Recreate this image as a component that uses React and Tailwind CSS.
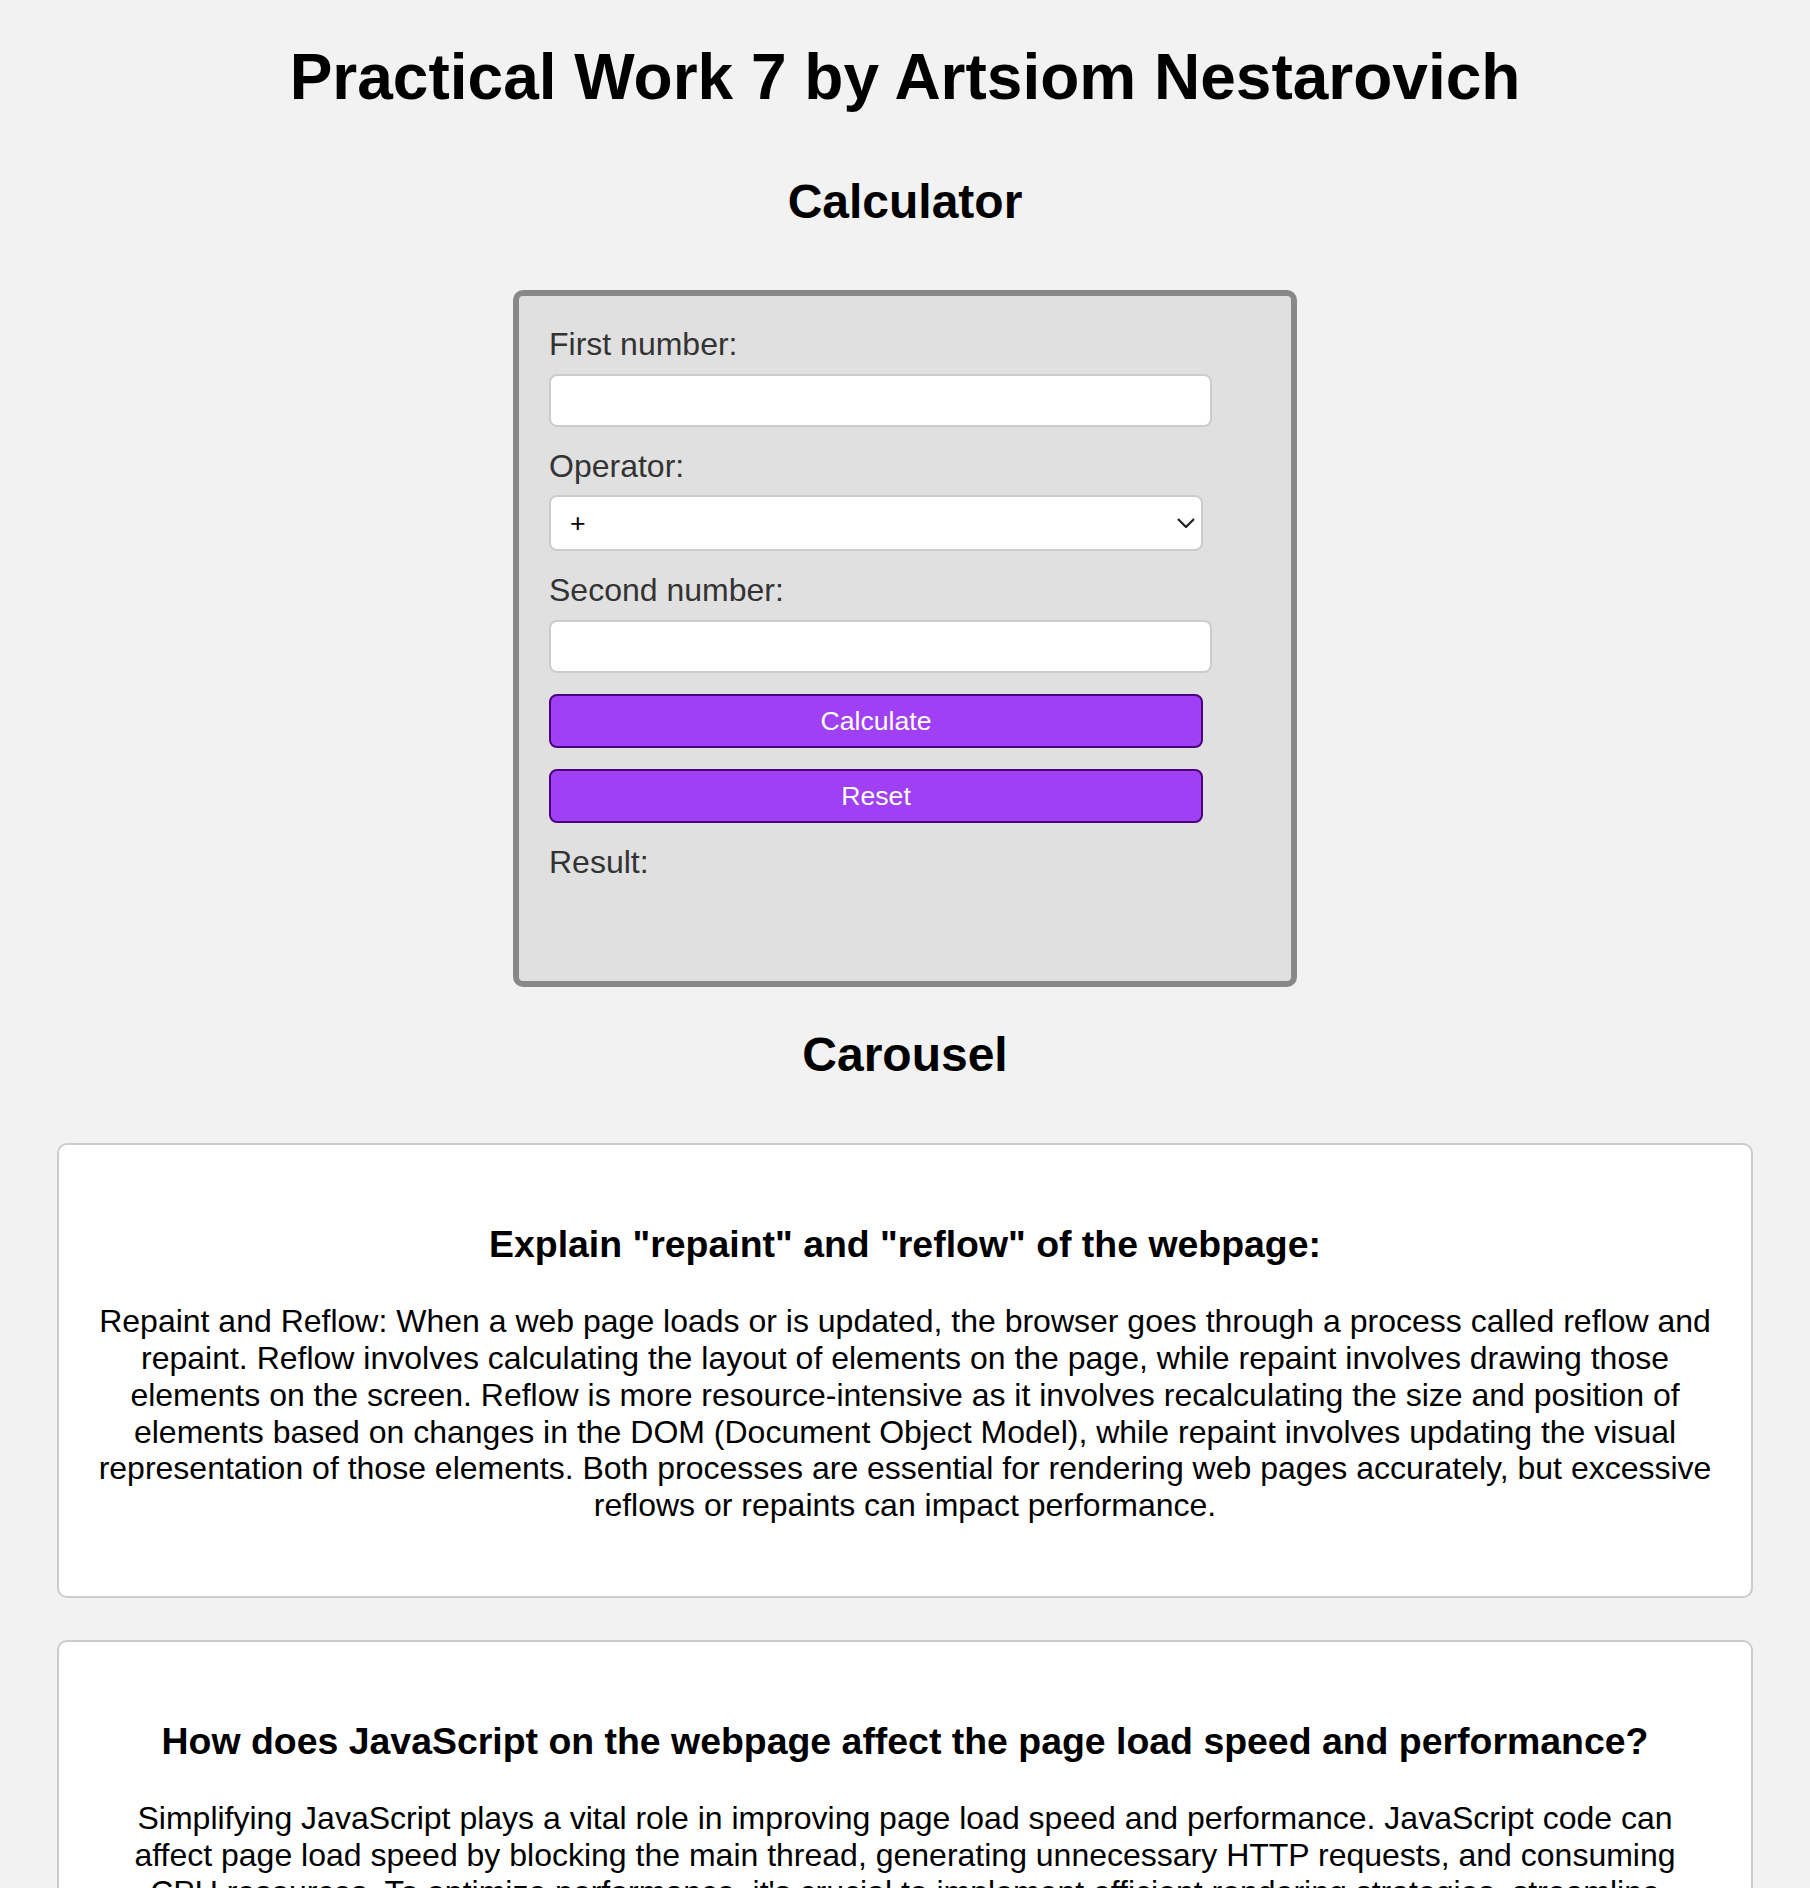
import { useState } from "react";

const cards = [
  {
    title: 'Explain "repaint" and "reflow" of the webpage:',
    text: "Repaint and Reflow: When a web page loads or is updated, the browser goes through a process called reflow and repaint. Reflow involves calculating the layout of elements on the page, while repaint involves drawing those elements on the screen. Reflow is more resource-intensive as it involves recalculating the size and position of elements based on changes in the DOM (Document Object Model), while repaint involves updating the visual representation of those elements. Both processes are essential for rendering web pages accurately, but excessive reflows or repaints can impact performance.",
  },
  {
    title: "How does JavaScript on the webpage affect the page load speed and performance?",
    text: "Simplifying JavaScript plays a vital role in improving page load speed and performance. JavaScript code can affect page load speed by blocking the main thread, generating unnecessary HTTP requests, and consuming CPU resources. To optimize performance, it's crucial to implement efficient rendering strategies, streamline JavaScript execution, reduce the number of requests and defer scripts that are not needed for the first render.",
  },
];

const Calculator = () => {
  const [first, setFirst] = useState("");
  const [second, setSecond] = useState("");
  const [operator, setOperator] = useState("+");
  const [result, setResult] = useState("");

  const calculate = () => {
    const a = parseFloat(first);
    const b = parseFloat(second);
    if (isNaN(a) || isNaN(b)) {
      setResult("Enter both numbers");
      return;
    }
    if (operator === "+") setResult(a + b);
    if (operator === "-") setResult(a - b);
    if (operator === "*") setResult(a * b);
    if (operator === "/") setResult(b === 0 ? "Division by zero" : a / b);
  };

  const reset = () => {
    setFirst("");
    setSecond("");
    setOperator("+");
    setResult("");
  };

  const label = "block text-[32px] leading-[1.15] text-[#333]";
  const input =
    "block w-[663px] h-[53px] bg-white border-2 border-[#ccc] rounded-[8px] px-[10px] text-[26.67px] outline-none";
  const button =
    "block w-[654px] h-[54px] mt-[21px] bg-[#a040f4] border-2 border-[#4b0082] rounded-[8px] text-white text-[26.67px] leading-none cursor-pointer";

  return (
    <div className="mx-auto mt-[61px] w-[784px] bg-[#e0e0e0] border-[6px] border-[#888] rounded-[10px] pt-[30px] px-[30px] pb-[100px]">
      <label className={label}>First number:</label>
      <input
        type="number"
        className={`${input} mt-[11px]`}
        value={first}
        onChange={(e) => setFirst(e.target.value)}
      />
      <label className={`${label} mt-[21px]`}>Operator:</label>
      <div className="relative mt-[11px] w-[654px] h-[56px]">
        <select
          className="appearance-none w-full h-full bg-white border-2 border-[#ccc] rounded-[8px] pl-[19px] text-[26.67px] text-black outline-none"
          value={operator}
          onChange={(e) => setOperator(e.target.value)}
        >
          <option value="+">+</option>
          <option value="-">-</option>
          <option value="*">*</option>
          <option value="/">/</option>
        </select>
        <svg
          className="absolute right-[8px] top-[23px] pointer-events-none"
          width="18"
          height="10"
          viewBox="0 0 18 10"
          fill="none"
        >
          <path d="M1 1L9 9L17 1" stroke="#222" strokeWidth="2.2" />
        </svg>
      </div>
      <label className={`${label} mt-[21px]`}>Second number:</label>
      <input
        type="number"
        className={`${input} mt-[11px]`}
        value={second}
        onChange={(e) => setSecond(e.target.value)}
      />
      <button className={button} onClick={calculate}>
        Calculate
      </button>
      <button className={button} onClick={reset}>
        Reset
      </button>
      <div className={`${label} mt-[21px]`}>Result: {result}</div>
    </div>
  );
};

const App = () => {
  return (
    <div className="min-h-screen bg-[#f2f2f2] text-black font-['Liberation_Sans',Arial,Helvetica,sans-serif] pt-[41px] pb-[60px]">
      <h1 className="text-center text-[64px] font-bold leading-[1.15]">
        Practical Work 7 by Artsiom Nestarovich
      </h1>
      <h2 className="mt-[59px] text-center text-[48px] font-bold leading-[1.15]">
        Calculator
      </h2>

      <Calculator />

      <h2 className="mt-[40px] text-center text-[48px] font-bold leading-[1.15]">
        Carousel
      </h2>

      <div className="mx-[57px] mt-[61px]">
        {cards.map((card, i) => (
          <div
            key={i}
            className="mb-[42px] bg-white border-2 border-[#ccc] rounded-[10px] px-[39px] py-[40px] text-center"
          >
            <h3 className="mt-[38px] mb-[37px] text-[37.44px] font-bold leading-[1.15]">
              {card.title}
            </h3>
            <p className="mb-[32px] text-[32px] leading-[1.15]">{card.text}</p>
          </div>
        ))}
      </div>
    </div>
  );
};

export default App;
